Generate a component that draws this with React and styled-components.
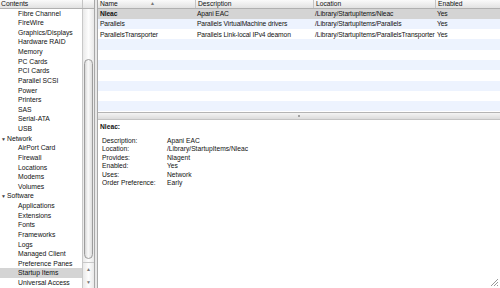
import React from "react";
import styled, { createGlobalStyle } from "styled-components";

const Global = createGlobalStyle`
  *, *::before, *::after { box-sizing: border-box; }
  html, body { margin: 0; padding: 0; background: #e8e8e8; }
  body { font-family: "Liberation Sans", Arial, sans-serif; }
`;

const Window = styled.div`
  width: 500px;
  height: 288px;
  display: flex;
  background: #e8e8e8;
  overflow: hidden;
  position: relative;
  font-size: 6.7px;
  color: #111;
`;

const Sidebar = styled.div`
  width: 95px;
  flex-shrink: 0;
  display: flex;
  flex-direction: column;
  background: #fff;
  border-right: 1px solid #a8a8a8;
  font-size: 6.8px;
`;

const HeaderBar = styled.div`
  height: 8.5px;
  display: flex;
  background: linear-gradient(#fafafa, #e2e2e2);
  border-bottom: 1px solid #b0b0b0;
  flex-shrink: 0;
`;

const HeaderCell = styled.div`
  width: ${p => p.w ? `${p.w}px` : "auto"};
  flex: ${p => p.w ? "none" : "1"};
  display: flex;
  align-items: center;
  padding-left: ${p => p.pad || 2}px;
  line-height: 7.5px;
  border-left: ${p => p.first ? "none" : "1px solid #c4c4c4"};
  overflow: hidden;
  white-space: nowrap;
  position: relative;
`;

const SortArrow = styled.span`
  position: absolute;
  left: 52px;
  top: 0;
  font-size: 5px;
  color: #777;
`;

const SideBody = styled.div`
  flex: 1;
  display: flex;
  min-height: 0;
`;

const List = styled.div`
  flex: 1;
  overflow: hidden;
`;

const Item = styled.div`
  height: 9.64px;
  line-height: 9.64px;
  padding-left: ${p => p.cat ? 1 : 18}px;
  background: ${p => p.sel ? "#d4d4d4" : "transparent"};
  white-space: nowrap;
`;

const Tri = styled.span`
  display: inline-block;
  width: 6px;
  font-size: 5px;
  color: #444;
`;

const Scroll = styled.div`
  width: 12px;
  border-left: 1px solid #c8c8c8;
  display: flex;
  flex-direction: column;
  background: linear-gradient(90deg, #e9e9e9, #fdfdfd 50%, #e9e9e9);
`;

const Track = styled.div`
  flex: 1;
  padding: 50px 1px 3px;
  display: flex;
`;

const Thumb = styled.div`
  flex: 1;
  border-radius: 5px;
  border: 1px solid #9c9c9c;
  background: linear-gradient(90deg, #d6d6d6, #fafafa 45%, #dedede);
`;

const Arrow = styled.div`
  height: 13px;
  display: flex;
  align-items: center;
  justify-content: center;
  font-size: 5px;
  color: #777;
  border-top: ${p => p.top ? "1px solid #c8c8c8" : "none"};
`;

const Main = styled.div`
  flex: 1;
  min-width: 0;
  margin-left: 2px;
  display: flex;
  flex-direction: column;
  border-left: 1px solid #a8a8a8;
`;

const Table = styled.div`
  height: 112px;
  background: #fff;
  display: flex;
  flex-direction: column;
  overflow: hidden;
  flex-shrink: 0;
`;

const Row = styled.div`
  height: 10.3px;
  flex-shrink: 0;
  display: flex;
  align-items: center;
  background: ${p => p.sel ? "#d4d4d4" : p.odd ? "#edf3fe" : "#fff"};
`;

const Cell = styled.div`
  width: ${p => p.w}px;
  flex: none;
  padding-left: 2px;
  white-space: nowrap;
  letter-spacing: -0.1px;
  font-weight: ${p => p.bold ? "bold" : "normal"};
`;

const Splitter = styled.div`
  height: 8px;
  flex-shrink: 0;
  border-top: 1px solid #b4b4b4;
  border-bottom: 1px solid #c4c4c4;
  background: linear-gradient(#f4f4f4, #dcdcdc);
  display: flex;
  align-items: center;
  justify-content: center;
`;

const Dot = styled.div`
  width: 2px;
  height: 2px;
  border-radius: 50%;
  background: #8a8a8a;
`;

const Detail = styled.div`
  flex: 1;
  background: #fff;
  padding: 1.5px 0 0 2px;
`;

const Title = styled.div`
  font-weight: bold;
  line-height: 9px;
  margin-bottom: 6px;
`;

const Props = styled.div`
  display: grid;
  grid-template-columns: 65px auto;
  padding-left: 2px;
  line-height: 8.6px;
`;

const Grip = styled.svg`
  position: absolute;
  right: 1px;
  bottom: 1px;
`;

const sidebar = [
  ["Fibre Channel"], ["FireWire"], ["Graphics/Displays"], ["Hardware RAID"],
  ["Memory"], ["PC Cards"], ["PCI Cards"], ["Parallel SCSI"], ["Power"],
  ["Printers"], ["SAS"], ["Serial-ATA"], ["USB"],
  ["Network", "cat"], ["AirPort Card"], ["Firewall"], ["Locations"], ["Modems"], ["Volumes"],
  ["Software", "cat"], ["Applications"], ["Extensions"], ["Fonts"], ["Frameworks"],
  ["Logs"], ["Managed Client"], ["Preference Panes"], ["Startup Items", "sel"], ["Universal Access"],
];

const cols = [97, 118, 122, 64];

const rows = [
  ["Nleac", "Apani EAC", "/Library/StartupItems/Nleac", "Yes"],
  ["Parallels", "Parallels VirtualMachine drivers", "/Library/StartupItems/Parallels", "Yes"],
  ["ParallelsTransporter", "Parallels Link-local IPv4 deamon", "/Library/StartupItems/ParallelsTransporter", "Yes"],
];

const details = [
  ["Description:", "Apani EAC"],
  ["Location:", "/Library/StartupItems/Nleac"],
  ["Provides:", "Nlagent"],
  ["Enabled:", "Yes"],
  ["Uses:", "Network"],
  ["Order Preference:", "Early"],
];

export default function App() {
  const blanks = Array.from({ length: 8 });
  return (
    <Window>
      <Global />
      <Sidebar>
        <HeaderBar>
          <HeaderCell first pad={1}>Contents</HeaderCell>
          <HeaderCell w={12} />
        </HeaderBar>
        <SideBody>
          <List>
            {sidebar.map(([label, kind]) => (
              <Item key={label} cat={kind === "cat"} sel={kind === "sel"}>
                {kind === "cat" && <Tri>▼</Tri>}
                {label}
              </Item>
            ))}
          </List>
          <Scroll>
            <Track><Thumb /></Track>
            <Arrow top>▲</Arrow>
            <Arrow>▼</Arrow>
          </Scroll>
        </SideBody>
      </Sidebar>
      <Main>
        <Table>
          <HeaderBar>
            <HeaderCell first w={cols[0]} pad={2}>Name<SortArrow>▲</SortArrow></HeaderCell>
            <HeaderCell w={cols[1]}>Description</HeaderCell>
            <HeaderCell w={cols[2]}>Location</HeaderCell>
            <HeaderCell>Enabled</HeaderCell>
          </HeaderBar>
          {rows.map((r, i) => (
            <Row key={r[0]} sel={i === 0} odd={i % 2 === 1}>
              {r.map((c, j) => (
                <Cell key={j} w={cols[j]} bold={i === 0 && j === 0}>{c}</Cell>
              ))}
            </Row>
          ))}
          {blanks.map((_, i) => (
            <Row key={i} odd={(i + 3) % 2 === 1} />
          ))}
        </Table>
        <Splitter><Dot /></Splitter>
        <Detail>
          <Title>Nleac:</Title>
          <Props>
            {details.map(([k, v]) => (
              <React.Fragment key={k}>
                <span>{k}</span>
                <span>{v}</span>
              </React.Fragment>
            ))}
          </Props>
        </Detail>
      </Main>
      <Grip width="9" height="9" viewBox="0 0 9 9">
        <path d="M8 1 L1 8 M8 4 L4 8 M8 7 L7 8" stroke="#999" strokeWidth="1" />
      </Grip>
    </Window>
  );
}
